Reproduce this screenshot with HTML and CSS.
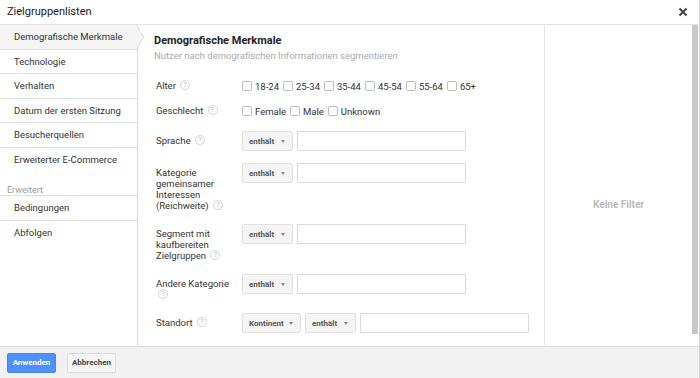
FILE: index.html
```html
<!DOCTYPE html>
<html lang="de">
<head>
    <meta charset="UTF-8">
    <title>Zielgruppenlisten</title>
    <link rel="stylesheet" href="styles.css">
</head>
<body>
    <div class="dialog">
        <div class="titlebar">
            <span class="title">Zielgruppenlisten</span>
            <button class="close-btn">
                <svg width="10" height="10" viewBox="0 0 10 10"><path d="M1.5 1.5 L8.5 8.5 M8.5 1.5 L1.5 8.5" stroke="#444" stroke-width="2"/></svg>
            </button>
        </div>
        <div class="content">
            <ul class="sidebar">
                <li class="nav-item active">Demografische Merkmale</li>
                <li class="nav-item">Technologie</li>
                <li class="nav-item">Verhalten</li>
                <li class="nav-item">Datum der ersten Sitzung</li>
                <li class="nav-item">Besucherquellen</li>
                <li class="nav-item last">Erweiterter E-Commerce</li>
                <li class="nav-section">Erweitert</li>
                <li class="nav-item">Bedingungen</li>
                <li class="nav-item last">Abfolgen</li>
            </ul>
            <div class="main">
                <h3 class="main-title">Demografische Merkmale</h3>
                <p class="subtitle">Nutzer nach demografischen Informationen segmentieren</p>

                <div class="field-row row-tight">
                    <div class="field-label">Alter <span class="help">?</span></div>
                    <div class="checks">
                        <label class="check"><span class="box"></span>18-24</label>
                        <label class="check"><span class="box"></span>25-34</label>
                        <label class="check"><span class="box"></span>35-44</label>
                        <label class="check"><span class="box"></span>45-54</label>
                        <label class="check"><span class="box"></span>55-64</label>
                        <label class="check"><span class="box"></span>65+</label>
                    </div>
                </div>
                <div class="field-row row-mid">
                    <div class="field-label">Geschlecht <span class="help">?</span></div>
                    <div class="checks">
                        <label class="check"><span class="box"></span>Female</label>
                        <label class="check"><span class="box"></span>Male</label>
                        <label class="check"><span class="box"></span>Unknown</label>
                    </div>
                </div>
                <div class="field-row">
                    <div class="field-label">Sprache <span class="help">?</span></div>
                    <div class="controls">
                        <div class="select">enthält <span class="caret"></span></div>
                        <div class="text-input"></div>
                    </div>
                </div>
                <div class="field-row">
                    <div class="field-label">Kategorie gemeinsamer Interessen (Reichweite) <span class="help">?</span></div>
                    <div class="controls">
                        <div class="select">enthält <span class="caret"></span></div>
                        <div class="text-input"></div>
                    </div>
                </div>
                <div class="field-row">
                    <div class="field-label">Segment mit kaufbereiten Zielgruppen <span class="help">?</span></div>
                    <div class="controls">
                        <div class="select">enthält <span class="caret"></span></div>
                        <div class="text-input"></div>
                    </div>
                </div>
                <div class="field-row">
                    <div class="field-label">Andere Kategorie <span class="help">?</span></div>
                    <div class="controls">
                        <div class="select">enthält <span class="caret"></span></div>
                        <div class="text-input"></div>
                    </div>
                </div>
                <div class="field-row">
                    <div class="field-label">Standort <span class="help">?</span></div>
                    <div class="controls">
                        <div class="select select-wide">Kontinent <span class="caret"></span></div>
                        <div class="select">enthält <span class="caret"></span></div>
                        <div class="text-input"></div>
                    </div>
                </div>
            </div>
            <div class="filters">Keine Filter</div>
            <div class="scrollbar"><div class="thumb"></div></div>
        </div>
        <div class="footer">
            <button class="btn btn-primary">Anwenden</button>
            <button class="btn">Abbrechen</button>
        </div>
    </div>
</body>
</html>
```

FILE: styles.css
```css
* {
    margin: 0;
    padding: 0;
    box-sizing: border-box;
    font-family: Roboto, 'Liberation Sans', Arial, sans-serif;
}
body {
    background: #fff;
    color: #333;
}
.dialog {
    width: 700px;
    height: 378px;
    display: flex;
    flex-direction: column;
    border-right: 1px solid #d4d4d4;
}
.titlebar {
    height: 25px;
    border-bottom: 1px solid #e3e3e3;
    display: flex;
    align-items: center;
    justify-content: space-between;
    padding: 0 11px 1px 7px;
}
.title {
    font-size: 11px;
    color: #222;
}
.close-btn {
    background: none;
    border: none;
    display: flex;
}
.content {
    height: 321px;
    display: flex;
}
.sidebar {
    list-style: none;
    width: 138px;
    border-right: 1px solid #dcdcdc;
}
.nav-item {
    height: 24.5px;
    line-height: 24px;
    padding-left: 14px;
    font-size: 9.5px;
    color: #333;
    border-bottom: 1px solid #e0e0e0;
    position: relative;
}
.nav-item.last {
    border-bottom: none;
}
.nav-item.active {
    background: #f5f5f5;
}
.nav-item.active::before,
.nav-item.active::after {
    content: '';
    position: absolute;
    top: 2px;
    border-style: solid;
    border-color: transparent;
}
.nav-item.active::before {
    right: -7px;
    border-width: 10px 0 10px 6px;
    border-left-color: #dcdcdc;
}
.nav-item.active::after {
    right: -6px;
    border-width: 10px 0 10px 6px;
    border-left-color: #f5f5f5;
}
.nav-section {
    height: 24px;
    padding: 13px 0 0 7px;
    font-size: 9px;
    color: #9a9a9a;
    border-bottom: 1px solid #e0e0e0;
}
.main {
    width: 407px;
    padding: 9px 0 0 16px;
    border-right: 1px solid #e3e3e3;
}
.main-title {
    font-size: 11px;
    font-weight: 700;
    color: #222;
    line-height: 14px;
}
.subtitle {
    font-size: 9.5px;
    color: #aaa;
    line-height: 13px;
    margin: 1px 0 14px;
}
.field-row {
    display: flex;
    align-items: flex-start;
    padding-left: 2px;
    margin-bottom: 12px;
}
.field-row.row-tight {
    margin-bottom: 5px;
}
.field-row.row-mid {
    margin-bottom: 10px;
}
.field-label {
    width: 86px;
    padding: 4px 4px 1px 0;
    font-size: 9.5px;
    line-height: 11px;
    color: #333;
}
.help {
    display: inline-block;
    width: 10px;
    height: 10px;
    border: 1px solid #d4d4d4;
    border-radius: 50%;
    font-size: 7px;
    line-height: 8px;
    text-align: center;
    color: #bbb;
    margin-left: 2px;
    vertical-align: top;
}
.checks {
    display: flex;
    align-items: center;
    height: 20px;
}
.check {
    display: flex;
    align-items: center;
    font-size: 9.5px;
    color: #333;
    margin-right: 4px;
}
.box {
    width: 10px;
    height: 10px;
    border: 1px solid #bdbdbd;
    border-radius: 2px;
    background: #fff;
    margin-right: 3px;
}
.controls {
    display: flex;
    gap: 4px;
}
.select {
    width: 51px;
    height: 20px;
    padding: 0 7px 0 6px;
    background: #f5f5f5;
    border: 1px solid #e0e0e0;
    border-radius: 2px;
    display: flex;
    align-items: center;
    justify-content: space-between;
    font-size: 8px;
    font-weight: 700;
    color: #555;
}
.select-wide {
    width: 59px;
}
.caret {
    border-style: solid;
    border-width: 3px 2.5px 0;
    border-color: #888 transparent transparent;
}
.text-input {
    width: 169px;
    height: 20px;
    border: 1px solid #dadada;
    border-radius: 1px;
    background: #fff;
}
.filters {
    width: 147px;
    display: flex;
    justify-content: center;
    align-items: center;
    padding-top: 37px;
    font-size: 10px;
    font-weight: 700;
    color: #bbb;
}
.scrollbar {
    width: 7px;
    padding-bottom: 12px;
}
.thumb {
    width: 6px;
    height: 100%;
    background: #c8c8c8;
}
.footer {
    flex: 1;
    background: #f1f1f1;
    border-top: 1px solid #dcdcdc;
    display: flex;
    align-items: center;
    gap: 11px;
    padding: 0 0 0 7px;
}
.btn {
    width: 49px;
    height: 20px;
    border: 1px solid #dcdcdc;
    border-radius: 2px;
    background: #f5f5f5;
    font-size: 8px;
    font-weight: 700;
    color: #444;
}
.btn-primary {
    background: #4d90fe;
    border-color: #4787ed;
    color: #fff;
}
```
